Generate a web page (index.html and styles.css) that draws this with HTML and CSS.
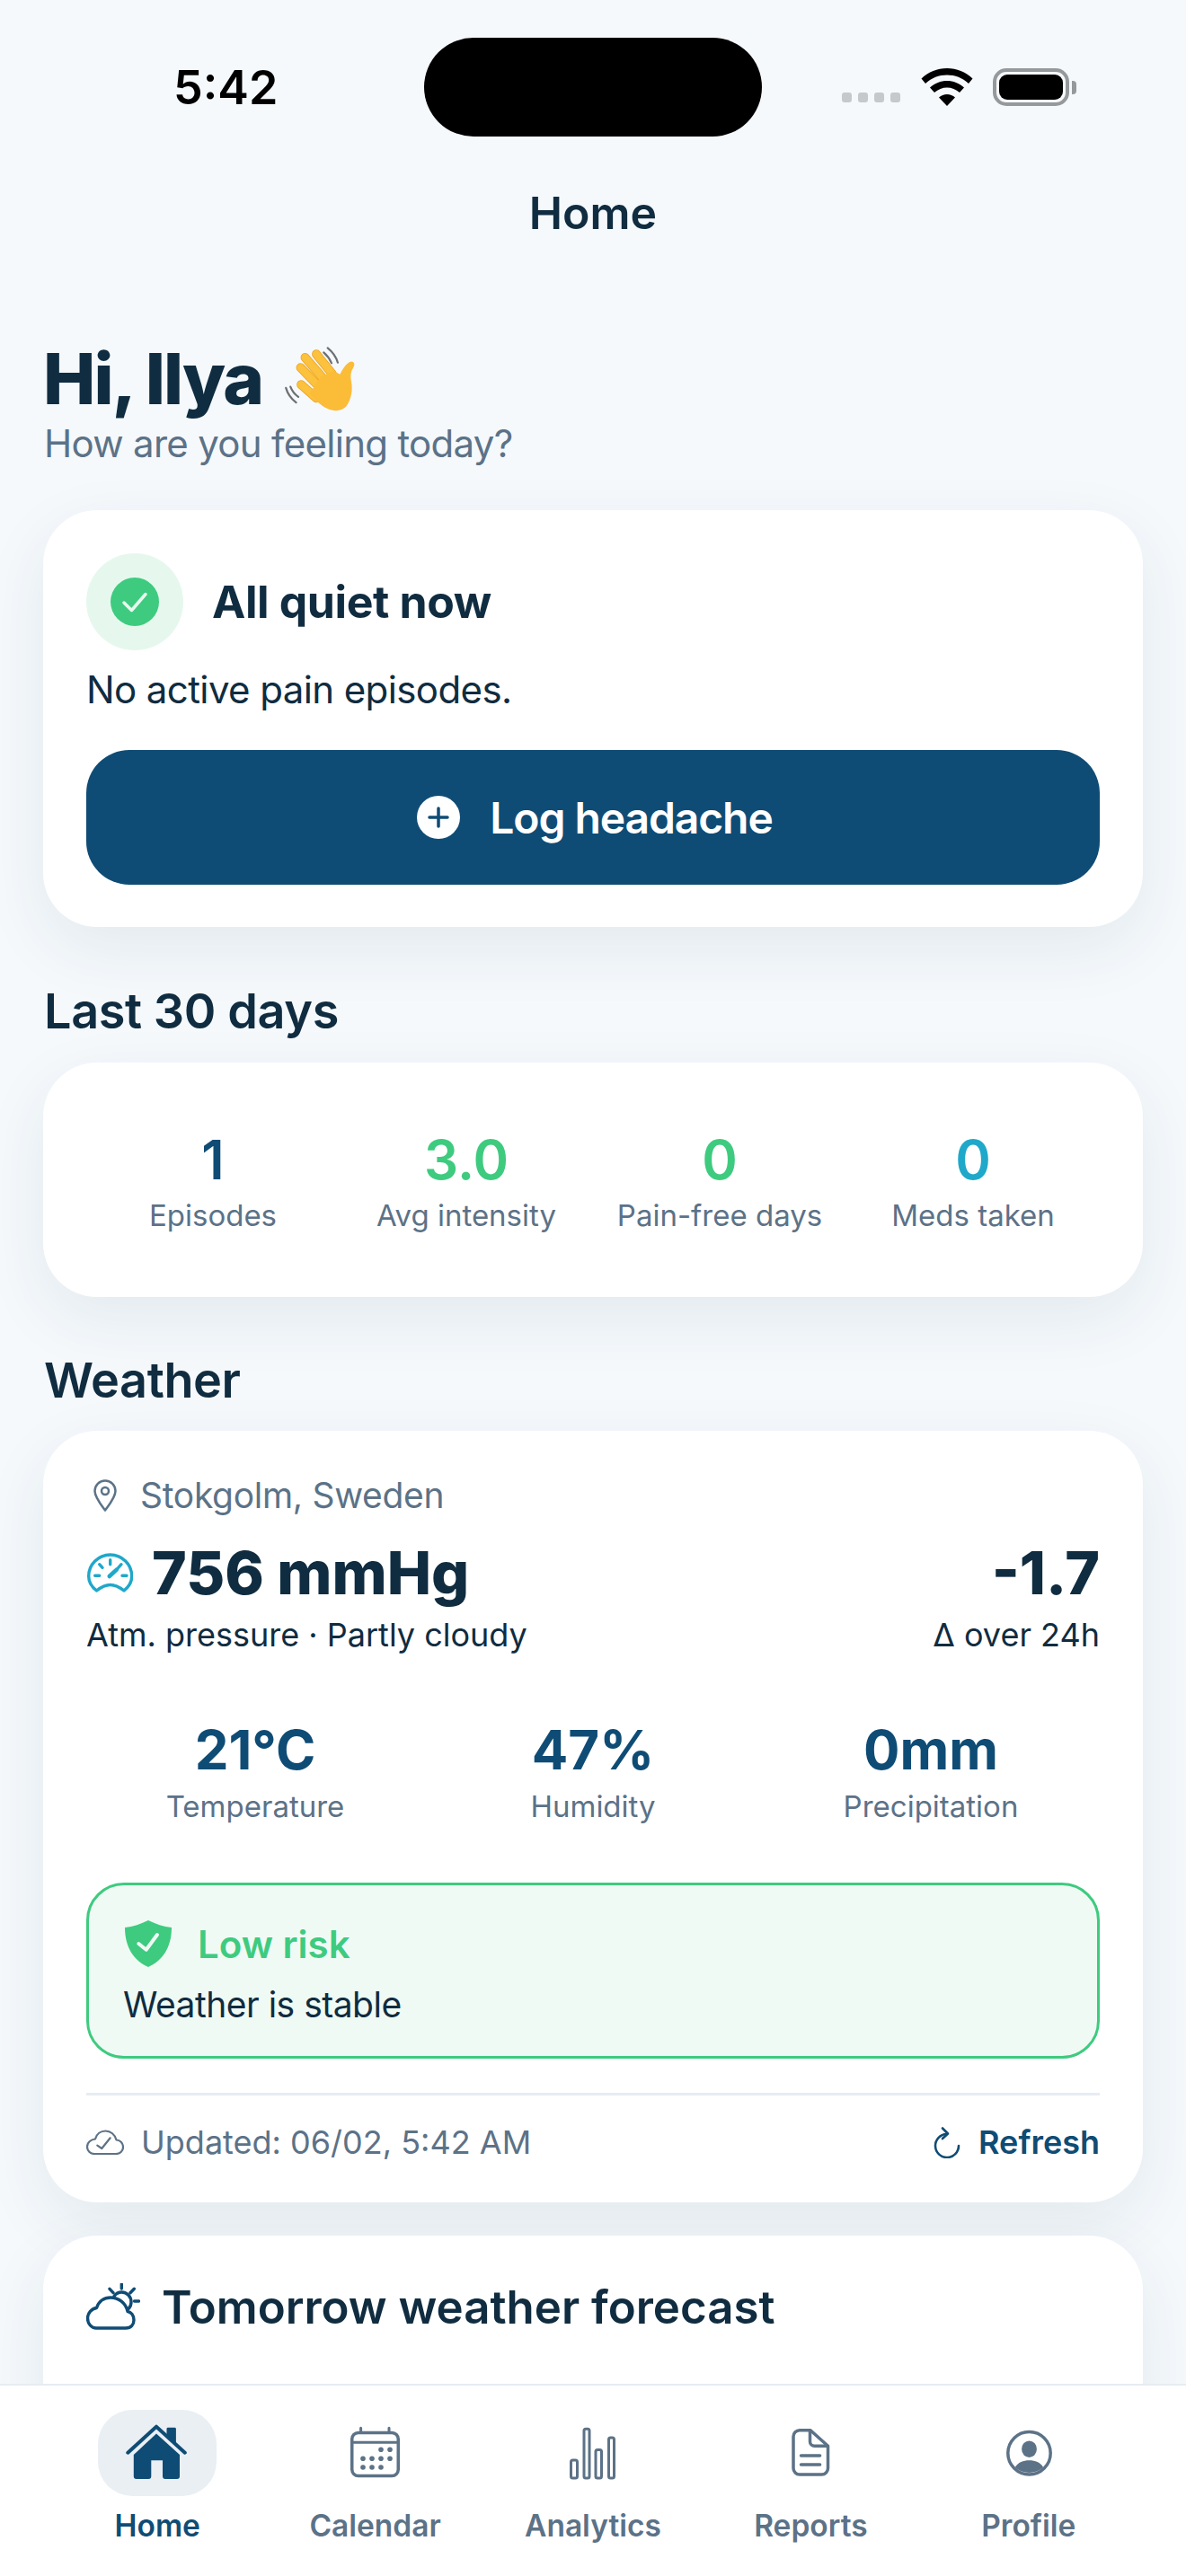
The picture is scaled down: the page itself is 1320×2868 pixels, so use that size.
FILE: index.html
```html
<!DOCTYPE html>
<html lang="en">

<head>
    <meta charset="UTF-8">
    <title>Home</title>
    <link rel="stylesheet" href="styles.css">
</head>

<body>
    <div class="phone">

        <!-- STATUS BAR -->
        <div class="status">
            <span class="time">5:42</span>
            <div class="island"></div>
            <div class="status-right">
                <div class="dots"><i></i><i></i><i></i><i></i></div>
                <svg class="wifi" width="58" height="42" viewBox="0 0 58 42">
                    <path d="M29 0C18 0 8.500 4 .5 11.500L5 17C12 10.500 20 7.500 29 7.500S46 10.500 53 17L57.500 11.500C49.500 4 40 0 29 0Z" />
                    <path d="M29 14C22 14 15.500 16.500 10 21.500L15 27C19 23.500 24 21.500 29 21.500S39 23.500 43 27L48 21.500C42.500 16.500 36 14 29 14Z" />
                    <path d="M29 29C25.500 29 22.500 30.300 20 32.500L29 42L38 32.500C35.500 30.300 32.500 29 29 29Z" />
                </svg>
                <div class="battery"><div class="battery-fill"></div></div>
                <div class="battery-cap"></div>
            </div>
        </div>

        <header class="topbar">Home</header>

        <main class="content">
            <h1 class="hello">Hi, Ilya
                <svg class="wave" width="79" height="75" viewBox="4 2 252 232">
                    <g fill="none" stroke="#6d6f72" stroke-width="7" stroke-linecap="round">
                        <path d="M156 6C176 22 186 38 192 58" />
                        <path d="M142 22C156 34 164 46 170 60" />
                        <path d="M8 148C14 170 26 186 44 200" />
                        <path d="M24 144C30 160 38 170 52 180" />
                    </g>
                    <g fill="none" stroke="#eda321" stroke-width="32" stroke-linecap="round">
                        <path d="M76 40L138 112" />
                        <path d="M116 28L172 98" />
                        <path d="M60 76L124 142" />
                        <path d="M62 136L116 184" />
                    </g>
                    <g fill="none" stroke="#fcc13d" stroke-width="27" stroke-linecap="round">
                        <path d="M76 40L138 112" />
                        <path d="M116 28L172 98" />
                        <path d="M60 76L124 142" />
                        <path d="M62 136L116 184" />
                    </g>
                    <path fill="#fbbc38" d="M132 108L178 88L200 100C210 78 226 56 240 54C252 54 254 66 246 78C238 90 236 106 240 126C246 154 240 190 222 214C206 232 176 232 156 222C132 210 110 190 92 168Z" />
                </svg>
            </h1>
            <p class="subhello">How are you feeling today?</p>

            <section class="card quiet">
                <div class="quiet-head">
                    <div class="quiet-ring">
                        <svg width="54" height="54" viewBox="0 0 54 54">
                            <circle cx="27" cy="27" r="27" fill="#3ecb7f" />
                            <path d="M15 28L23.500 36.500L39 18.500" fill="none" stroke="#e8f8ef" stroke-width="3.500" stroke-linecap="round" stroke-linejoin="round" />
                        </svg>
                    </div>
                    <h2 class="quiet-title">All quiet now</h2>
                </div>
                <p class="quiet-text">No active pain episodes.</p>
                <button class="log-btn">
                    <svg width="48" height="48" viewBox="0 0 48 48">
                        <circle cx="24" cy="24" r="24" fill="#fff" />
                        <path d="M24 14V34M14 24H34" stroke="#0f4c75" stroke-width="3.500" stroke-linecap="round" />
                    </svg>
                    Log headache
                </button>
            </section>

            <h2 class="section-title">Last 30 days</h2>
            <section class="card stats">
                <div class="stat"><div class="stat-num blue">1</div><div class="stat-label">Episodes</div></div>
                <div class="stat"><div class="stat-num green">3.0</div><div class="stat-label">Avg intensity</div></div>
                <div class="stat"><div class="stat-num green">0</div><div class="stat-label">Pain-free days</div></div>
                <div class="stat"><div class="stat-num teal">0</div><div class="stat-label">Meds taken</div></div>
            </section>

            <h2 class="section-title weather-title">Weather</h2>
            <section class="card weather">
                <div class="location">
                    <svg width="26" height="36" viewBox="0 0 26 36" fill="none" stroke="#5c7287" stroke-width="2.500" stroke-linejoin="round">
                        <path d="M13 34.500C9 29 1.500 20 1.500 13A11.500 11.500 0 0 1 24.500 13C24.500 20 17 29 13 34.500Z" />
                        <circle cx="13" cy="13" r="4" />
                    </svg>
                    Stokgolm, Sweden
                </div>
                <div class="pressure">
                    <div class="pressure-main">
                        <svg width="52" height="46" viewBox="0 0 52 46" fill="none" stroke="#1fa8c9" stroke-width="3.400" stroke-linecap="round" stroke-linejoin="round">
                            <path d="M11.500 43C5 38 2.700 33 2.700 27A24 24 0 0 1 50.700 27C50.700 33 48 38 42 43C37 39 32 36.500 26.700 36.500C21 36.500 16.500 39 11.500 43Z" />
                            <path d="M9.700 26.300H14.700M40 26.300H45M14.700 13.700L18 17.300M26.700 8.700V13.700M39 13.700L35.700 17.300" />
                            <path d="M25.700 27L34 19.300" stroke-width="4.500" />
                        </svg>
                        <span class="pressure-num">756 mmHg</span>
                    </div>
                    <span class="pressure-num">-1.7</span>
                </div>
                <div class="pressure-sub">
                    <span>Atm. pressure · Partly cloudy</span>
                    <span>Δ over 24h</span>
                </div>
                <div class="metrics">
                    <div class="metric"><div class="metric-num">21°C</div><div class="stat-label">Temperature</div></div>
                    <div class="metric"><div class="metric-num">47%</div><div class="stat-label">Humidity</div></div>
                    <div class="metric"><div class="metric-num">0mm</div><div class="stat-label">Precipitation</div></div>
                </div>
                <div class="risk">
                    <div class="risk-head">
                        <svg width="52" height="52" viewBox="0 0 52 52">
                            <path fill="#3ecb7f" d="M26 0C34 4 43 7 52 8C52 30 42 45 26 52C10 45 0 30 0 8C9 7 18 4 26 0Z" />
                            <path d="M15.300 26L23.700 32.700L36 16" fill="none" stroke="#f0faf5" stroke-width="4" stroke-linecap="round" stroke-linejoin="round" />
                        </svg>
                        <span class="risk-title">Low risk</span>
                    </div>
                    <p class="risk-text">Weather is stable</p>
                </div>
                <div class="updated">
                    <div class="updated-left">
                        <svg width="42" height="28" viewBox="0 0 42 28" fill="none" stroke="#5c7287" stroke-width="2.200" stroke-linecap="round" stroke-linejoin="round">
                            <path d="M9 27H33C38 27 41 23.500 41 19.500C41 15 37.500 11.500 33.500 11.500C32 5.500 27 1.500 21.500 1.500C16 1.500 11.500 5 10 10.500C5 11 1 14.500 1 19C1 23.500 4.500 27 9 27Z" />
                            <path d="M12.300 17.700L17.300 21L26.700 9.300" />
                        </svg>
                        <span>Updated: 06/02, 5:42 AM</span>
                    </div>
                    <div class="refresh">
                        <svg width="30" height="36" viewBox="0 0 30 36" fill="none" stroke="#0f4c75" stroke-width="2.600" stroke-linecap="round" stroke-linejoin="round">
                            <path d="M14.500 9A13 13 0 1 0 28 22" />
                            <path d="M10 2.500L16 8.500L10 14" />
                        </svg>
                        Refresh
                    </div>
                </div>
            </section>

            <section class="card forecast">
                <div class="forecast-head">
                    <svg width="60" height="53" viewBox="0 0 60 53" fill="none" stroke="#0f4c75" stroke-width="3.400" stroke-linecap="round" stroke-linejoin="round">
                        <path d="M11 50H44C50 50 53 46 53 41C53 36 50 32 46 31.500C44 22 36 16 27 16C20 16 14 20 11.500 27.500C5.500 28.500 1.500 33.500 1.500 39C1.500 45.500 6 50 11 50Z" />
                        <path d="M31 14.500C33 11.500 36 10 39.500 10C45.500 10 50 15 50 21C50 24 49 26.500 47 28.500" />
                        <path d="M39.300 1V6M26 6.300L30 10.700M53.300 6.300L49 10.700M53.500 20H58.500" />
                    </svg>
                    <h2 class="forecast-title">Tomorrow weather forecast</h2>
                </div>
            </section>
        </main>

        <!-- TAB BAR -->
        <nav class="tabbar">
            <div class="tab active">
                <div class="tab-icon">
                    <svg width="70" height="66" viewBox="0 0 70 66" fill="#0f4c75">
                        <path d="M45.500 16V6A1.500 1.500 0 0 1 47 4.700H54.400A1.500 1.500 0 0 1 55.900 6V26Z" />
                        <path d="M2.300 32.700L34 3.700L65.800 32.700" fill="none" stroke="#0f4c75" stroke-width="4" stroke-linecap="round" stroke-linejoin="round" />
                        <path d="M34 11.500L60 35V59A3 3 0 0 1 57 62H44A3 3 0 0 1 41 59V41.300H28.300V59A3 3 0 0 1 25.300 62H11.800A3 3 0 0 1 8.800 59V35Z" />
                    </svg>
                </div>
                <span>Home</span>
            </div>
            <div class="tab">
                <div class="tab-icon">
                    <svg width="64" height="62" viewBox="0 0 64 62" fill="#5c7287" stroke="#5c7287">
                        <rect x="5.750" y="8.500" width="51.500" height="48" rx="7" fill="none" stroke-width="3.500" />
                        <path d="M5.750 19.300H57.250M15.600 3.300V8M47 3.300V8" fill="none" stroke-width="3" stroke-linecap="round" />
                        <g stroke="none">
                            <circle cx="38" cy="27.300" r="2.800" /><circle cx="48" cy="27.300" r="2.800" />
                            <circle cx="18" cy="37.300" r="2.800" /><circle cx="28" cy="37.300" r="2.800" /><circle cx="38" cy="37.300" r="2.800" /><circle cx="48" cy="37.300" r="2.800" />
                            <circle cx="18" cy="47" r="2.800" /><circle cx="28" cy="47" r="2.800" /><circle cx="38" cy="47" r="2.800" />
                        </g>
                    </svg>
                </div>
                <span>Calendar</span>
            </div>
            <div class="tab">
                <div class="tab-icon">
                    <svg width="60" height="64" viewBox="0 0 60 64" fill="none" stroke="#5c7287" stroke-width="3">
                        <rect x="5.500" y="40" width="7" height="20" rx="2" />
                        <rect x="20" y="5.200" width="6" height="54.800" rx="2" />
                        <rect x="33" y="28.500" width="6.500" height="31.500" rx="2" />
                        <rect x="47.500" y="15" width="6" height="45" rx="2" />
                    </svg>
                </div>
                <span>Analytics</span>
            </div>
            <div class="tab">
                <div class="tab-icon">
                    <svg width="52" height="62" viewBox="0 0 52 62" fill="none" stroke="#5c7287" stroke-width="3.500" stroke-linecap="round" stroke-linejoin="round">
                        <path d="M14 5.800H26L45.500 23.300V48A7 7 0 0 1 38.500 55H14A7 7 0 0 1 7 48V12.800A7 7 0 0 1 14 5.800Z" />
                        <path d="M25.500 6V18.300A5 5 0 0 0 30.500 23.300H45" />
                        <path d="M15.500 34H36.600M15.500 44H36.600" />
                    </svg>
                </div>
                <span>Reports</span>
            </div>
            <div class="tab">
                <div class="tab-icon">
                    <svg width="60" height="60" viewBox="0 0 60 60" fill="#5c7287">
                        <circle cx="30.500" cy="30.300" r="23.700" fill="none" stroke="#5c7287" stroke-width="3.500" />
                        <ellipse cx="30.500" cy="25.700" rx="8.400" ry="9.300" />
                        <path d="M14.800 46C18 40.500 24 38.300 30.500 38.300S43 40.500 46.200 46A23.700 23.700 0 0 1 14.800 46Z" />
                    </svg>
                </div>
                <span>Profile</span>
            </div>
        </nav>
    </div>
</body>

</html>
```

FILE: styles.css
```css
* {
    box-sizing: border-box;
}

body {
    margin: 0;
    font-family: "Inter", "Liberation Sans", sans-serif;
    color: #102c40;
    background: #f5f9fc;
}

h1,
h2,
p {
    margin: 0;
}

.phone {
    width: 1320px;
    height: 2868px;
    display: flex;
    flex-direction: column;
    overflow: hidden;
}


/* STATUS BAR */

.status {
    height: 152px;
    padding: 42px 0 0 193px;
    display: flex;
    align-items: center;
    flex-shrink: 0;
}

.time {
    width: 279px;
    font-size: 52px;
    font-weight: 600;
    color: #000;
}

.island {
    width: 376px;
    height: 110px;
    border-radius: 55px;
    background: #000;
}

.status-right {
    margin-left: 89px;
    display: flex;
    align-items: center;
}

.dots {
    display: flex;
    gap: 7px;
    margin-top: 22px;
    margin-right: 23px;
}

.dots i {
    width: 11px;
    height: 11px;
    border-radius: 3px;
    background: #c5c9cc;
}

.wifi {
    fill: #000;
    margin-right: 22px;
}

.battery {
    width: 85px;
    height: 42px;
    padding: 3px;
    border: 4px solid #96999c;
    border-radius: 15px;
}

.battery-fill {
    height: 100%;
    border-radius: 9px;
    background: #000;
}

.battery-cap {
    width: 5px;
    height: 15px;
    margin-left: 3px;
    border-radius: 0 4px 4px 0;
    background: #96999c;
}

.topbar {
    padding-top: 55px;
    height: 115px;
    line-height: 60px;
    text-align: center;
    font-size: 50px;
    font-weight: 600;
    flex-shrink: 0;
}


/* CONTENT */

.content {
    flex: 1;
    min-height: 0;
    padding: 0 48px;
    overflow: hidden;
}

.hello {
    margin-top: 113px;
    height: 84px;
    line-height: 84px;
    font-size: 78px;
    font-weight: 800;
    letter-spacing: -2px;
    display: flex;
    align-items: center;
    gap: 25px;
}

.subhello {
    margin-top: 5px;
    padding-left: 1px;
    line-height: 50px;
    font-size: 42px;
    letter-spacing: -0.7px;
    color: #5c7287;
}

.card {
    background: #fff;
    border-radius: 60px;
    box-shadow: 0 24px 72px rgba(20, 50, 80, 0.08);
}

.quiet {
    margin-top: 49px;
    padding: 48px 48px 47px;
}

.quiet-head {
    display: flex;
    align-items: center;
    gap: 32px;
}

.quiet-ring {
    width: 108px;
    height: 108px;
    border-radius: 50%;
    background: #e6f8ee;
    display: flex;
    align-items: center;
    justify-content: center;
}

.quiet-title {
    font-size: 50px;
    font-weight: 700;
    letter-spacing: -0.4px;
}

.quiet-text {
    margin-top: 19px;
    line-height: 50px;
    font-size: 42px;
    letter-spacing: -0.6px;
}

.log-btn {
    width: 100%;
    height: 150px;
    margin-top: 42px;
    padding: 0 0 0 4px;
    border: none;
    border-radius: 48px;
    background: #0f4c75;
    color: #fff;
    font-family: inherit;
    font-size: 48px;
    font-weight: 600;
    letter-spacing: -1.1px;
    display: flex;
    align-items: center;
    justify-content: center;
    gap: 33px;
}

.section-title {
    margin-top: 62px;
    padding-left: 1px;
    line-height: 64px;
    font-size: 54px;
    font-weight: 600;
    letter-spacing: -0.4px;
}

.weather-title {
    margin-top: 61px;
}

.stats {
    margin-top: 25px;
    padding: 72px 48px 69px;
    display: grid;
    grid-template-columns: repeat(4, 1fr);
    text-align: center;
}

.stat-num {
    line-height: 72px;
    font-size: 60px;
    font-weight: 600;
}

.stat-label {
    margin-top: 4px;
    line-height: 44px;
    font-size: 33px;
    color: #5c7287;
}

.blue {
    color: #0f4c75;
}

.green {
    color: #3ecb7f;
}

.teal {
    color: #1fa8c9;
}


/* WEATHER */

.weather {
    margin-top: 24px;
    padding: 48px 48px 41px;
}

.location {
    display: flex;
    align-items: center;
    gap: 26px;
    padding-left: 8px;
    line-height: 48px;
    font-size: 39px;
    letter-spacing: -0.3px;
    color: #5c7287;
}

.pressure {
    margin-top: 22px;
    height: 80px;
    display: flex;
    justify-content: space-between;
    align-items: center;
}

.pressure-main {
    display: flex;
    align-items: center;
    gap: 21px;
}

.pressure-num {
    font-size: 66px;
    font-weight: 800;
}

.pressure-sub {
    margin-top: 7px;
    line-height: 44px;
    font-size: 36px;
    display: flex;
    justify-content: space-between;
}

.metrics {
    margin-top: 70px;
    display: grid;
    grid-template-columns: repeat(3, 1fr);
    text-align: center;
}

.metric-num {
    line-height: 72px;
    font-size: 60px;
    font-weight: 700;
    color: #0f4c75;
}

.metric .stat-label {
    margin-top: 5px;
}

.risk {
    margin-top: 63px;
    height: 196px;
    padding: 37px 38px 0;
    border: 3px solid #3ecb7f;
    border-radius: 42px;
    background: #f0faf5;
}

.risk-head {
    height: 56px;
    padding-left: 2px;
    display: flex;
    align-items: center;
    gap: 29px;
}

.risk-title {
    font-size: 42px;
    font-weight: 600;
    color: #3ecb7f;
}

.risk-text {
    margin-top: 16px;
    line-height: 48px;
    font-size: 39px;
    letter-spacing: -0.5px;
}

.updated {
    margin-top: 38px;
    padding-top: 26px;
    border-top: 3px solid #e6ecf2;
    height: 81px;
    display: flex;
    justify-content: space-between;
    align-items: center;
    font-size: 36px;
    color: #5c7287;
}

.updated-left {
    display: flex;
    align-items: center;
    gap: 19px;
}

.refresh {
    display: flex;
    align-items: center;
    gap: 20px;
    font-weight: 600;
    color: #0f4c75;
}

.forecast {
    margin-top: 37px;
    height: 400px;
    padding: 47px 48px;
}

.forecast-head {
    height: 64px;
    display: flex;
    align-items: center;
    gap: 24px;
}

.forecast-title {
    font-size: 51px;
    font-weight: 600;
}


/* TAB BAR */

.tabbar {
    height: 214px;
    padding: 27px 54px 0;
    border-top: 2px solid #e6ecf2;
    background: #fff;
    display: grid;
    grid-template-columns: repeat(5, 1fr);
    flex-shrink: 0;
    position: relative;
}

.tab {
    display: flex;
    flex-direction: column;
    align-items: center;
    gap: 11px;
    line-height: 44px;
    font-size: 33.500px;
    font-weight: 600;
    color: #5c7287;
}

.tab-icon {
    width: 132px;
    height: 96px;
    border-radius: 38px;
    display: flex;
    align-items: center;
    justify-content: center;
}

.active {
    color: #0f4c75;
}

.active .tab-icon {
    background: #eaeff4;
}
```
